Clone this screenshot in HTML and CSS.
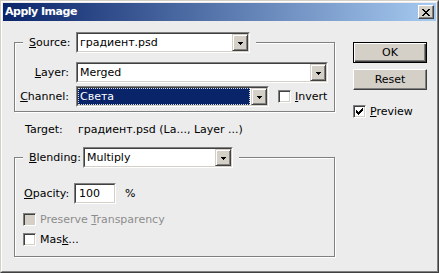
FILE: index.html
```html
<!DOCTYPE html>
<html>
<head>
<meta charset="utf-8">
<title>Apply Image</title>
<link rel="stylesheet" href="styles.css">
</head>
<body>
<div class="window">
  <div class="frame">
    <div class="titlebar">
      <span class="title">Apply Image</span>
      <span class="close"><svg width="8" height="7" viewBox="0 0 8 7"><path fill="#000" d="M0 0h2v1H0zM6 0h2v1H6zM1 1h2v1H1zM5 1h2v1H5zM2 2h4v1H2zM3 3h2v1H3zM2 4h4v1H2zM1 5h2v1H1zM5 5h2v1H5zM0 6h2v1H0zM6 6h2v1H6z"/></svg></span>
    </div>
    <div class="content">
      <div class="main">
        <div class="group src">
          <div class="head">
            <span class="hlabel src-label"><u>S</u>ource:</span>
            <span class="combo w-src"><span class="combo-in"><span class="val">градиент.psd</span><span class="drop"><svg width="5" height="3" viewBox="0 0 5 3"><path fill="#000" d="M0 0h5v1H0zM1 1h3v1H1zM2 2h1v1H2z"/></svg></span></span></span>
          </div>
          <div class="rows">
            <span class="rlabel"><u>L</u>ayer:</span>
            <span class="combo w-layer"><span class="combo-in"><span class="val">Merged</span><span class="drop"><svg width="5" height="3" viewBox="0 0 5 3"><path fill="#000" d="M0 0h5v1H0zM1 1h3v1H1zM2 2h1v1H2z"/></svg></span></span></span>
            <span class="rlabel"><u>C</u>hannel:</span>
            <span class="cell">
              <span class="combo w-ch focused"><span class="combo-in"><span class="val sel">Света</span><span class="drop"><svg width="5" height="3" viewBox="0 0 5 3"><path fill="#000" d="M0 0h5v1H0zM1 1h3v1H1zM2 2h1v1H2z"/></svg></span></span></span>
              <span class="check invert"><span class="box"></span><span><u>I</u>nvert</span></span>
            </span>
          </div>
        </div>

        <div class="target">
          <span class="tlabel">Target:</span>
          <span class="tval">градиент.psd (La..., Layer ...)</span>
        </div>

        <div class="group blend">
          <div class="head">
            <span class="hlabel blend-label"><u>B</u>lending:</span>
            <span class="combo w-blend"><span class="combo-in"><span class="val">Multiply</span><span class="drop"><svg width="5" height="3" viewBox="0 0 5 3"><path fill="#000" d="M0 0h5v1H0zM1 1h3v1H1zM2 2h1v1H2z"/></svg></span></span></span>
          </div>
          <div class="blend-body">
            <div class="opacity">
              <span class="olabel"><u>O</u>pacity:</span>
              <span class="field"><span class="field-in">100</span></span>
              <span class="pct">%</span>
            </div>
            <span class="check disabled preserve"><span class="box"></span><span>Preserve <u>T</u>ransparency</span></span>
            <span class="check mask"><span class="box"></span><span>Mas<u>k</u>...</span></span>
          </div>
        </div>
      </div>

      <div class="side">
        <button class="btn default">OK</button>
        <button class="btn reset">Reset</button>
        <span class="check preview"><span class="box"><svg width="7" height="7" viewBox="0 0 7 7"><path fill="#000" d="M6 0h1v1H6zM5 1h2v1H5zM0 2h1v1H0zM4 2h3v1H4zM0 3h2v1H0zM3 3h3v1H3zM0 4h5v1H0zM1 5h3v1H1zM2 6h1v1H2z"/></svg></span><span><u>P</u>review</span></span>
      </div>
    </div>
  </div>
</div>
</body>
</html>
```

FILE: styles.css
```css
* {
  box-sizing: border-box;
}

html,
body {
  margin: 0;
  padding: 0;
}

body {
  width: 439px;
  height: 273px;
  overflow: hidden;
  background: #ececec;
  color: #000;
  font-family: "DejaVu Sans", sans-serif;
  font-size: 11px;
}

u {
  text-decoration: underline;
  text-underline-offset: 1px;
}

.window {
  width: 439px;
  height: 273px;
  border: 1px solid;
  border-color: #d4d0c8 #404040 #404040 #d4d0c8;
}

.frame {
  height: 100%;
  border: 1px solid;
  border-color: #fff #808080 #808080 #fff;
  padding: 1px;
  background: #ececec;
}

.titlebar {
  height: 18px;
  display: flex;
  align-items: flex-start;
  justify-content: space-between;
  background: linear-gradient(to right, #0a246a, #a6caf0);
}

.title {
  color: #fff;
  font-weight: bold;
  line-height: 18px;
  padding-left: 2px;
  letter-spacing: -0.5px;
}

.close {
  width: 16px;
  height: 14px;
  margin: 2px 2px 0 0;
  background: #d4d0c8;
  border: 1px solid;
  border-color: #fff #404040 #404040 #fff;
  box-shadow: inset -1px -1px #808080;
  display: flex;
  align-items: center;
  justify-content: center;
}

.close svg {
  display: block;
}

.content {
  display: flex;
  align-items: flex-start;
}

.main {
  width: 321px;
  margin-left: 11px;
  display: flex;
  flex-direction: column;
}

/* etched group box */
.group {
  border: 1px solid #808080;
  box-shadow: inset 1px 1px #fff, 1px 1px #fff;
  display: flex;
  flex-direction: column;
}

.group.src {
  margin-top: 21px;
  padding-bottom: 4px;
}

.group.blend {
  margin-top: 20px;
  padding-bottom: 10px;
}

.head {
  align-self: flex-start;
  display: flex;
  align-items: center;
  height: 21px;
  margin: -11px 0 0 8px;
  padding: 0 6px;
  background: #ececec;
}

.hlabel {
  white-space: nowrap;
}

.src-label {
  width: 47px;
}

.blend-label {
  width: 54px;
}

/* combo boxes */
.combo {
  display: flex;
  height: 21px;
  background: #fff;
  border: 1px solid;
  border-color: #808080 #fff #fff #808080;
}

.combo-in {
  flex: 1;
  display: flex;
  border: 1px solid;
  border-color: #404040 #d4d0c8 #d4d0c8 #404040;
  min-width: 0;
}

.val {
  flex: 1;
  padding-left: 2px;
  line-height: 17px;
  white-space: nowrap;
  overflow: hidden;
}

.val.sel {
  background: #0a246a;
  color: #fff;
  margin-right: 1px;
  outline: 1px dotted #d8d8d8;
  outline-offset: -1px;
}

.drop {
  width: 16px;
  height: 17px;
  background: #d4d0c8;
  border: 1px solid;
  border-color: #d4d0c8 #404040 #404040 #d4d0c8;
  box-shadow: inset 1px 1px #fff, inset -1px -1px #808080;
  display: flex;
  align-items: center;
  justify-content: center;
}

.drop svg {
  display: block;
  margin-top: 1px;
}

.w-src {
  width: 174px;
}

.w-layer {
  width: 252px;
}

.w-ch {
  width: 193px;
}

.w-blend {
  width: 150px;
}

.rows {
  display: grid;
  grid-template-columns: 61px auto;
  row-gap: 3px;
  margin-top: 9px;
  align-items: center;
}

.rlabel {
  text-align: right;
  padding-right: 7px;
  white-space: nowrap;
}

.cell {
  display: flex;
  align-items: center;
}

/* checkboxes */
.check {
  display: flex;
  align-items: center;
  height: 13px;
  white-space: nowrap;
}

.box {
  width: 13px;
  height: 13px;
  flex: none;
  margin-right: 4px;
  background: #fff;
  border: 1px solid;
  border-color: #808080 #fff #fff #808080;
  box-shadow: inset 1px 1px #404040, inset -1px -1px #d4d0c8;
  display: flex;
  align-items: center;
  justify-content: center;
}

.box svg {
  display: block;
}

.check.disabled {
  color: #8c8c8c;
}

.check.disabled .box {
  background: #d4d0c8;
}

.invert {
  margin-left: 9px;
}

/* target */
.target {
  display: flex;
  height: 14px;
  line-height: 14px;
  margin-top: 11px;
  padding-left: 11px;
}

.tlabel {
  width: 53px;
}

/* blending body */
.blend-body {
  display: flex;
  flex-direction: column;
  padding-left: 8px;
  margin-top: 15px;
}

.opacity {
  display: flex;
  align-items: center;
  height: 21px;
}

.olabel {
  width: 50px;
  margin-left: 1px;
}

.field {
  width: 42px;
  height: 21px;
  background: #fff;
  border: 1px solid;
  border-color: #808080 #fff #fff #808080;
}

.field-in {
  display: block;
  height: 19px;
  border: 1px solid;
  border-color: #404040 #d4d0c8 #d4d0c8 #404040;
  padding-left: 3px;
  line-height: 17px;
}

.pct {
  margin-left: 9px;
}

.preserve {
  margin-top: 9px;
}

.mask {
  margin-top: 7px;
}

/* right side */
.side {
  width: 74px;
  margin-left: 18px;
  margin-top: 21px;
  display: flex;
  flex-direction: column;
}

.btn {
  width: 74px;
  height: 21px;
  padding: 0;
  margin: 0;
  font: inherit;
  color: #000;
  background: #d4d0c8;
  border: 1px solid;
  border-color: #fff #404040 #404040 #fff;
  box-shadow: inset -1px -1px #808080;
}

.btn.default {
  border-color: #000;
  box-shadow: inset 1px 1px #fff, inset -1px -1px #404040, inset -2px -2px #808080;
}

.btn.reset {
  margin-top: 6px;
}

.preview {
  margin-top: 15px;
}
```
